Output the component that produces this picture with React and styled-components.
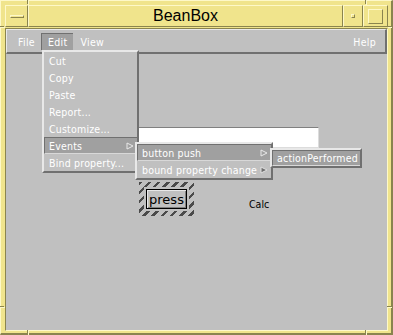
import React from 'react'
import styled, { createGlobalStyle } from 'styled-components'

const Global = createGlobalStyle`
  body { margin: 0; background: #c0c0c0; }
  * { box-sizing: border-box; }
`

const uiFont = `"DejaVu Sans Condensed", "DejaVu Sans", sans-serif`

const Frame = styled.div`
  position: relative;
  width: 393px;
  height: 335px;
  display: flex;
  flex-direction: column;
  gap: 1px;
  background: #f0e48c;
  border-left: 1px solid #fdf8c8;
  border-top: 1px solid #fdf8c8;
  border-right: 2px solid #8a844e;
  border-bottom: 2px solid #8a844e;
  padding: 4px 3px 2px 4px;
`

const Notch = styled.div`
  position: absolute;
  background: #8a844e;
  box-shadow: 1px 1px 0 #fdf8c8;
`

const TitleBar = styled.div`
  display: flex;
  height: 22px;
`

const TitleCell = styled.div`
  width: ${p => p.w ? p.w + 'px' : 'auto'};
  flex: ${p => p.w ? 'none' : 1};
  display: flex;
  align-items: center;
  justify-content: center;
  border-top: 1px solid #fdf8c8;
  border-left: 1px solid #fdf8c8;
  border-right: 1px solid #8a844e;
  border-bottom: 1px solid #8a844e;
  font-family: "Liberation Sans", Arial, sans-serif;
  font-size: 16px;
  color: #000;
`

const Bevel = styled.div`
  width: ${p => p.w}px;
  height: ${p => p.h}px;
  border-top: 1px solid #fdf8c8;
  border-left: 1px solid #fdf8c8;
  border-right: 1px solid #8a844e;
  border-bottom: 1px solid #8a844e;
`

const Client = styled.div`
  flex: 1;
  display: flex;
  flex-direction: column;
  background: #c0c0c0;
  border-top: 1px solid #8a844e;
  border-left: 1px solid #8a844e;
  border-right: 1px solid #fdf8c8;
  border-bottom: 1px solid #fdf8c8;
`

const MenuBar = styled.div`
  display: flex;
  align-items: center;
  height: 25px;
  padding: 0 3px 0 4px;
  border-top: 1px solid #e8e8e8;
  border-left: 1px solid #e8e8e8;
  border-right: 2px solid #707070;
  border-bottom: 2px solid #707070;
`

const MenuTitle = styled.div`
  height: 17px;
  display: flex;
  align-items: center;
  padding: 0 6px;
  margin-left: ${p => p.push ? 'auto' : '0'};
  font-family: ${uiFont};
  font-size: 10.5px;
  letter-spacing: 0.3px;
  color: #fff;
  background: ${p => p.active ? '#a0a0a0' : 'transparent'};
  border-top: 1px solid ${p => p.active ? '#707070' : 'transparent'};
  border-left: 1px solid ${p => p.active ? '#707070' : 'transparent'};
`

const Canvas = styled.div`
  flex: 1;
`

const Menu = styled.div`
  position: absolute;
  left: ${p => p.x}px;
  top: ${p => p.y}px;
  width: ${p => p.w}px;
  display: flex;
  flex-direction: column;
  background: #c0c0c0;
  border-top: 2px solid #e8e8e8;
  border-left: 2px solid #e8e8e8;
  border-right: 2px solid #707070;
  border-bottom: 2px solid #707070;
`

const Item = styled.div`
  height: ${p => p.h || 17}px;
  display: flex;
  align-items: center;
  justify-content: space-between;
  padding: 0 3px 0 4px;
  font-family: ${uiFont};
  font-size: 10.5px;
  letter-spacing: 0.2px;
  color: #fff;
  white-space: nowrap;
  background: ${p => p.active ? '#a0a0a0' : 'transparent'};
  border-top: 1px solid ${p => p.active ? '#707070' : 'transparent'};
  border-left: 1px solid ${p => p.active ? '#707070' : 'transparent'};
  border-bottom: 1px solid ${p => p.active ? '#d8d8d8' : 'transparent'};
`

const Field = styled.div`
  position: absolute;
  left: 137px;
  top: 126px;
  width: 181px;
  height: 21px;
  background: #fff;
  border-top: 1px solid #808080;
  border-left: 1px solid #808080;
  border-right: 1px solid #dcdcdc;
  border-bottom: 1px solid #dcdcdc;
`

const Hatch = styled.div`
  position: absolute;
  left: 138px;
  top: 181px;
  width: 55px;
  height: 34px;
  padding: 5px;
  background: repeating-linear-gradient(135deg, #4a4a4a 0 2.5px, #c0c0c0 2.5px 6.5px);
`

const Press = styled.div`
  width: 100%;
  height: 100%;
  background: #c0c0c0;
  padding: 2px;
`

const PressFace = styled.div`
  width: 100%;
  height: 100%;
  display: flex;
  align-items: center;
  justify-content: center;
  border: 1px solid #000;
  box-shadow: inset 1px 1px 0 #e8e8e8, inset -1px -1px 0 #808080;
  font-family: "DejaVu Sans", sans-serif;
  font-size: 13px;
  color: #000;
`

const Label = styled.div`
  position: absolute;
  left: 248px;
  top: 197px;
  font-family: ${uiFont};
  font-size: 10.5px;
  color: #000;
`

const Arrow = ({ filled }) => (
  <svg width="8" height="8" viewBox="0 0 8 8">
    <polygon
      points="1,1 7,4 1,7"
      fill={filled ? '#707070' : 'none'}
      stroke={filled ? '#e0e0e0' : '#e8e8e8'}
      strokeWidth="1"
    />
  </svg>
)

export default function App() {
  return (
    <Frame>
      <Global />
      <Notch style={{ left: 26, top: -1, width: 1, height: 4 }} />
      <Notch style={{ left: 364, top: -1, width: 1, height: 4 }} />
      <Notch style={{ left: -1, top: 25, width: 4, height: 1 }} />
      <Notch style={{ left: 386, top: 25, width: 4, height: 1 }} />
      <Notch style={{ left: -1, top: 305, width: 4, height: 1 }} />
      <Notch style={{ left: 386, top: 305, width: 4, height: 1 }} />
      <Notch style={{ left: 26, top: 329, width: 1, height: 4 }} />
      <Notch style={{ left: 364, top: 329, width: 1, height: 4 }} />
      <TitleBar>
        <TitleCell w={23}><Bevel w={14} h={3} /></TitleCell>
        <TitleCell>BeanBox</TitleCell>
        <TitleCell w={20}><Bevel w={4} h={4} /></TitleCell>
        <TitleCell w={25}><Bevel w={15} h={15} /></TitleCell>
      </TitleBar>
      <Client>
        <MenuBar>
          <MenuTitle>File</MenuTitle>
          <MenuTitle active>Edit</MenuTitle>
          <MenuTitle>View</MenuTitle>
          <MenuTitle push>Help</MenuTitle>
        </MenuBar>
        <Canvas />
      </Client>

      <Field />
      <Hatch>
        <Press><PressFace>press</PressFace></Press>
      </Hatch>
      <Label>Calc</Label>

      <Menu x={41} y={49} w={97}>
        <Item>Cut</Item>
        <Item>Copy</Item>
        <Item>Paste</Item>
        <Item>Report...</Item>
        <Item>Customize...</Item>
        <Item active>Events <Arrow /></Item>
        <Item>Bind property...</Item>
      </Menu>

      <Menu x={134} y={141} w={138}>
        <Item active>button push <Arrow /></Item>
        <Item>bound property change <Arrow filled /></Item>
      </Menu>

      <Menu x={269} y={147} w={92}>
        <Item active h={16}>actionPerformed</Item>
      </Menu>
    </Frame>
  )
}
